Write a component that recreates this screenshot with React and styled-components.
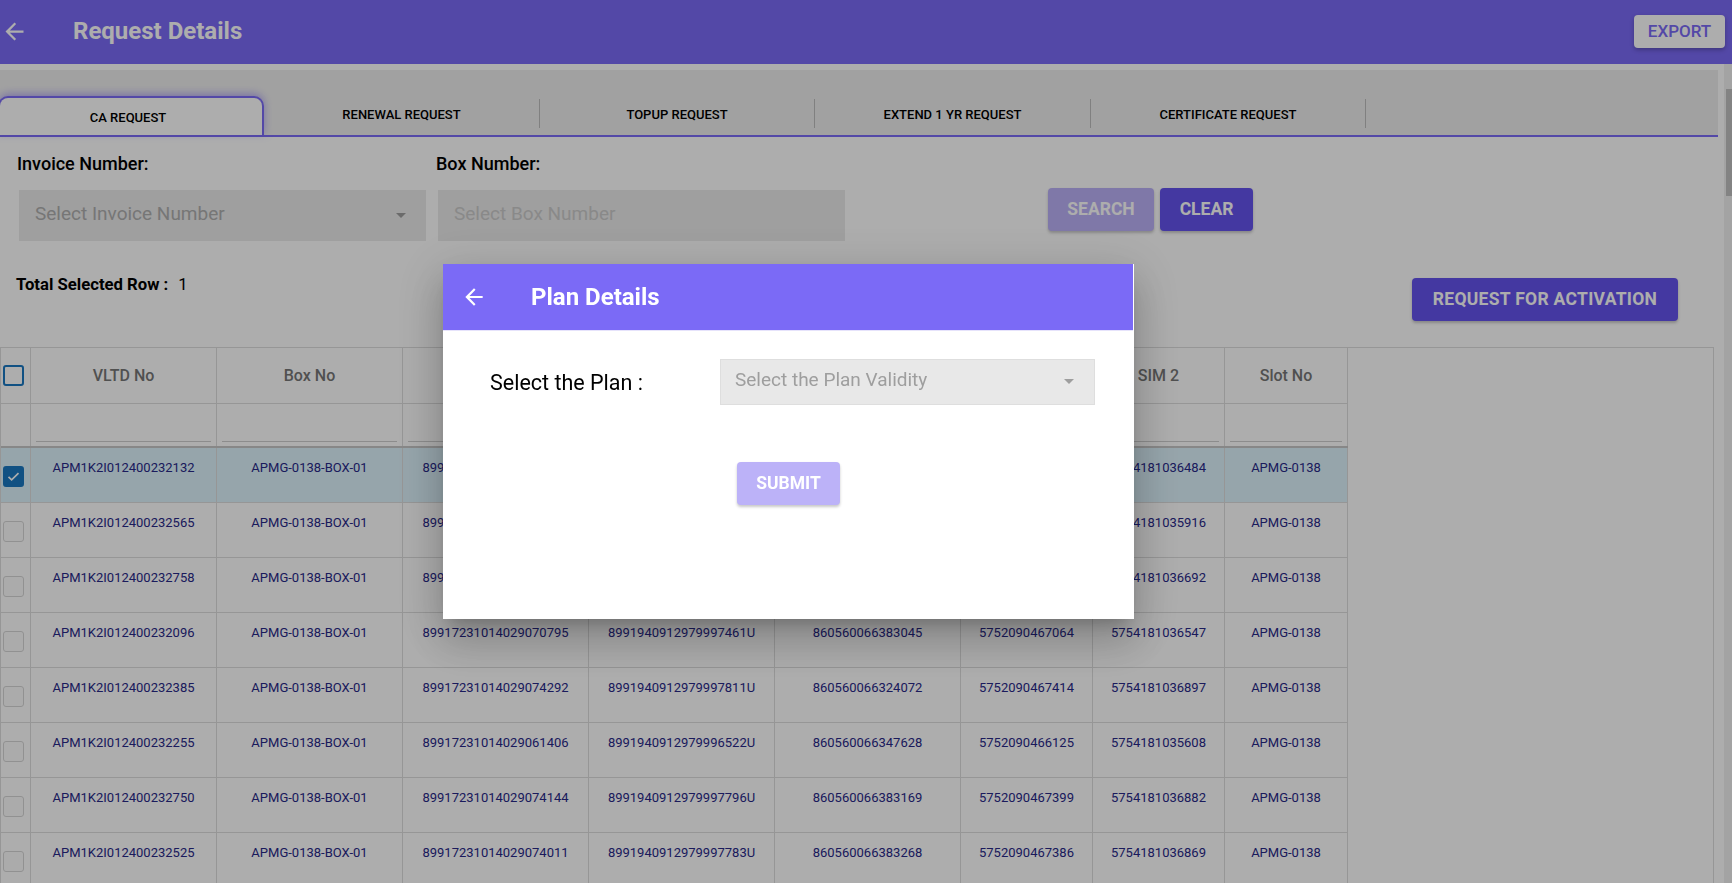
import React from "react";
import styled, { createGlobalStyle } from "styled-components";

const PURPLE = "#7b6af6";
const ACTION = "#6553ed";
const SOFT = "#bcb2f8";
const LINE = "#dddddd";
const NAVY = "#282888";

const Global = createGlobalStyle`
  html, body { margin: 0; padding: 0; overflow: hidden; background: #fff; }
  body { font-family: Roboto, "Liberation Sans", Arial, sans-serif; }
  *, *::before, *::after { box-sizing: border-box; }
`;

const Page = styled.div`
  width: 1732px;
  height: 883px;
  display: flex;
  flex-direction: column;
  overflow: hidden;
  background: #fff;
`;

const TopBar = styled.header`
  height: 64px;
  flex: none;
  display: flex;
  align-items: center;
  padding: 0 7px 2px 1px;
  background: ${PURPLE};
`;

const IconWrap = styled.span`
  display: flex;
  color: #fff;
`;

const Title = styled.h1`
  margin: 0 0 0 ${(p) => p.$gap}px;
  font-size: 24px;
  font-weight: 700;
  color: #fff;
  line-height: 1;
`;

const ExportButton = styled.button`
  margin-left: auto;
  width: 91px;
  height: 33px;
  padding: 0;
  border: none;
  border-radius: 4px;
  background: #fff;
  color: ${PURPLE};
  font-family: inherit;
  font-size: 17px;
  font-weight: 500;
  box-shadow: 0 2px 4px rgba(0, 0, 0, 0.25);
`;

const Main = styled.div`
  flex: 1;
  min-height: 0;
  display: flex;
`;

const Content = styled.div`
  flex: 1;
  min-width: 0;
  display: flex;
  flex-direction: column;
  padding: 6px 6px 0 0;
  overflow: hidden;
`;

const Rail = styled.div`
  width: 8px;
  flex: none;
  background: #f1f1f1;
  padding: 25px 0 0 2px;
`;

const Thumb = styled.div`
  width: 6px;
  height: 107px;
  background: #c1c1c1;
`;

const TabStrip = styled.nav`
  flex: none;
  height: 67px;
  display: flex;
  align-items: flex-end;
  background: #eeeeee;
  border-bottom: 2px solid ${PURPLE};
`;

const Tab = styled.div`
  flex: none;
  display: flex;
  align-items: center;
  justify-content: center;
  font-size: 13px;
  font-weight: 500;
  color: #000;
  ${(p) =>
    p.$active
      ? `
    width: 266px;
    height: 39px;
    margin-left: -2px;
    padding: 2px 6px 0 0;
    background: #fff;
    border: 2px solid ${PURPLE};
    border-bottom: none;
    border-radius: 10px 10px 0 0;
    box-shadow: 0 -2px 8px rgba(123, 106, 246, 0.55);
  `
      : `
    width: ${p.$w}px;
    height: 29px;
    margin-bottom: 7px;
    padding-top: 2px;
    border-right: 1px solid #bdbdbd;
  `}
`;

const FilterBar = styled.div`
  flex: none;
  display: flex;
  align-items: flex-start;
  padding: 15px 0 0 17px;
`;

const Field = styled.div`
  width: 409px;
  margin-right: 10px;
  display: flex;
  flex-direction: column;
`;

const FieldLabel = styled.label`
  font-size: 18px;
  font-weight: 500;
  line-height: 24px;
  color: #000;
`;

const SelectBox = styled.div`
  margin: 14px 0 0 2px;
  width: 407px;
  height: 51px;
  display: flex;
  align-items: center;
  padding: 0 20px 4px 16px;
  background: #eaeaea;
  font-size: 19px;
  color: ${(p) => (p.$muted ? "#cbcbcb" : "#afafaf")};
`;

const Caret = styled.svg`
  margin: 4px 0 0 auto;
  flex: none;
  fill: #9e9e9e;
`;

const ButtonGroup = styled.div`
  display: flex;
  gap: 6px;
  margin: 36px 0 0 193px;
`;

const ActionButton = styled.button`
  height: 43px;
  width: ${(p) => p.$w}px;
  padding: 0 0 2px;
  border: none;
  border-radius: 4px;
  background: ${(p) => (p.$soft ? SOFT : ACTION)};
  color: #fff;
  font-family: inherit;
  font-size: 17.5px;
  font-weight: 700;
  box-shadow: 0 2px 3px rgba(0, 0, 0, 0.22);
`;

const SummaryRow = styled.div`
  flex: none;
  display: flex;
  justify-content: space-between;
  align-items: flex-start;
  margin-top: 34px;
  padding: 0 40px 0 16px;
`;

const SummaryText = styled.div`
  font-size: 16.7px;
  font-weight: 700;
  line-height: 20px;
  color: #000;
`;

const SummaryValue = styled.span`
  font-weight: 400;
  margin-left: 10px;
`;

const ActivateButton = styled(ActionButton)`
  margin-top: 3px;
  letter-spacing: 0.3px;
  font-size: 17.5px;
`;

const GridFrame = styled.div`
  flex: 1;
  min-height: 0;
  margin: 26px 4px 0 0;
  border: 1px solid ${LINE};
  border-bottom: none;
  overflow: hidden;
`;

const COLS = "30px 186px 186px 186px 186px 186px 132px 132px 123px";

const GridRow = styled.div`
  display: grid;
  grid-template-columns: ${COLS};
  width: 1347px;
  height: ${(p) => p.$h}px;
  background: ${(p) => (p.$selected ? "#def4fd" : "transparent")};
  border-bottom: ${(p) => (p.$heavy ? "2px solid #c8c8c8" : "none")};
`;

const HeadCell = styled.div`
  display: flex;
  align-items: center;
  justify-content: ${(p) => (p.$start ? "flex-start" : "center")};
  padding-left: ${(p) => (p.$start ? 2 : 0)}px;
  border-right: 1px solid ${LINE};
  border-bottom: 1px solid ${LINE};
  font-size: 16px;
  font-weight: 500;
  color: #777;
`;

const FilterCell = styled.div`
  border-right: 1px solid ${LINE};
  padding: 4px 5px 0;
`;

const FilterInput = styled.div`
  height: 34px;
  background: #fff;
  border-bottom: 1px solid #cfcfcf;
`;

const DataCell = styled.div`
  padding-top: 12px;
  border-right: 1px solid ${LINE};
  border-bottom: 1px solid ${LINE};
  text-align: center;
  font-size: 13px;
  line-height: 16px;
  color: ${NAVY};
  white-space: nowrap;
  overflow: hidden;
`;

const CheckCell = styled.div`
  padding: 18px 0 0 2px;
  border-right: 1px solid ${LINE};
  border-bottom: 1px solid ${LINE};
`;

const Box = styled.span`
  width: 21px;
  height: 21px;
  display: flex;
  align-items: center;
  justify-content: center;
  border-radius: 3px;
  ${(p) =>
    p.$variant === "checked"
      ? `background: #1a78c2; border: 2px solid #1a78c2;`
      : p.$variant === "head"
      ? `background: #fff; border: 2.5px solid #1a78c2;`
      : `background: #fdfdfd; border: 1.5px solid #d6d6d6;`}
`;

const Overlay = styled.div`
  position: fixed;
  inset: 0;
  z-index: 10;
  display: flex;
  align-items: center;
  padding-left: 443px;
  background: rgba(0, 0, 0, 0.32);
`;

const Dialog = styled.section`
  width: 691px;
  height: 355px;
  display: flex;
  flex-direction: column;
  background: #fff;
  overflow: hidden;
  box-shadow: 0px 11px 15px -7px rgba(0, 0, 0, 0.2),
    0px 24px 38px 3px rgba(0, 0, 0, 0.14), 0px 9px 46px 8px rgba(0, 0, 0, 0.12);
`;

const DialogHeader = styled.div`
  flex: none;
  height: 67px;
  display: flex;
  align-items: center;
  padding-left: 18px;
  margin-right: 1px;
  background: ${PURPLE};
  border-bottom: 1px solid #e6e3fb;
`;

const DialogBody = styled.div`
  padding-top: 28px;
`;

const PlanRow = styled.div`
  display: flex;
  align-items: center;
  padding-left: 47px;
`;

const PlanLabel = styled.span`
  width: 230px;
  font-size: 21.5px;
  font-weight: 400;
  color: #000;
`;

const PlanSelect = styled.div`
  width: 375px;
  height: 46px;
  display: flex;
  align-items: center;
  padding: 0 20px 5px 14px;
  background: #e8e8e8;
  border: 1px solid #dedede;
  font-size: 19px;
  color: #9e9e9e;
`;

const SubmitRow = styled.div`
  display: flex;
  justify-content: center;
  margin-top: 57px;
`;

const ArrowBack = ({ size }) => (
  <svg width={size} height={size} viewBox="0 0 24 24" fill="currentColor">
    <path d="M20 11H7.83l5.59-5.59L12 4l-8 8 8 8 1.41-1.41L7.83 13H20v-2z" />
  </svg>
);

const DropCaret = () => (
  <Caret width="10" height="5" viewBox="0 0 10 5">
    <path d="M0 0l5 5 5-5z" />
  </Caret>
);

const Tick = () => (
  <svg width="15" height="15" viewBox="0 0 24 24" fill="none" stroke="#fff" strokeWidth="2.6">
    <path d="M4 12.5l5 5L20 6.5" />
  </svg>
);

const HEADERS = ["VLTD No", "Box No", "ICCID 1", "ICCID 2", "IMEI No", "SIM 1", "SIM 2", "Slot No"];

const ROWS = [
  ["APM1K2I012400232132", "89917231014029074218", "8991940912979997512U", "860560066335921", "5752090467180", "5754181036484"],
  ["APM1K2I012400232565", "89917231014029061559", "8991940912979996609U", "860560066347719", "5752090466318", "5754181035916"],
  ["APM1K2I012400232758", "89917231014029074381", "8991940912979997832U", "860560066324155", "5752090467553", "5754181036692"],
  ["APM1K2I012400232096", "89917231014029070795", "8991940912979997461U", "860560066383045", "5752090467064", "5754181036547"],
  ["APM1K2I012400232385", "89917231014029074292", "8991940912979997811U", "860560066324072", "5752090467414", "5754181036897"],
  ["APM1K2I012400232255", "89917231014029061406", "8991940912979996522U", "860560066347628", "5752090466125", "5754181035608"],
  ["APM1K2I012400232750", "89917231014029074144", "8991940912979997796U", "860560066383169", "5752090467399", "5754181036882"],
  ["APM1K2I012400232525", "89917231014029074011", "8991940912979997783U", "860560066383268", "5752090467386", "5754181036869"],
];

const TABS = [
  { label: "CA REQUEST", active: true },
  { label: "RENEWAL REQUEST", w: 276 },
  { label: "TOPUP REQUEST", w: 275 },
  { label: "EXTEND 1 YR REQUEST", w: 276 },
  { label: "CERTIFICATE REQUEST", w: 275 },
];

export default function App() {
  return (
    <Page>
      <Global />
      <TopBar>
        <IconWrap>
          <ArrowBack size={27} />
        </IconWrap>
        <Title $gap={45}>Request Details</Title>
        <ExportButton>EXPORT</ExportButton>
      </TopBar>

      <Main>
        <Content>
          <TabStrip>
            {TABS.map((t) => (
              <Tab key={t.label} $active={t.active} $w={t.w}>
                {t.label}
              </Tab>
            ))}
          </TabStrip>

          <FilterBar>
            <Field>
              <FieldLabel>Invoice Number:</FieldLabel>
              <SelectBox>
                Select Invoice Number
                <DropCaret />
              </SelectBox>
            </Field>
            <Field>
              <FieldLabel>Box Number:</FieldLabel>
              <SelectBox $muted>Select Box Number</SelectBox>
            </Field>
            <ButtonGroup>
              <ActionButton $soft $w={106}>SEARCH</ActionButton>
              <ActionButton $w={93}>CLEAR</ActionButton>
            </ButtonGroup>
          </FilterBar>

          <SummaryRow>
            <SummaryText>
              Total Selected Row :<SummaryValue>1</SummaryValue>
            </SummaryText>
            <ActivateButton $w={266}>REQUEST FOR ACTIVATION</ActivateButton>
          </SummaryRow>

          <GridFrame>
            <GridRow $h={56}>
              <HeadCell $start>
                <Box $variant="head" />
              </HeadCell>
              {HEADERS.map((h) => (
                <HeadCell key={h}>{h}</HeadCell>
              ))}
            </GridRow>
            <GridRow $h={44} $heavy>
              <FilterCell />
              {HEADERS.map((h) => (
                <FilterCell key={h}>
                  <FilterInput />
                </FilterCell>
              ))}
            </GridRow>
            {ROWS.map((r, i) => (
              <GridRow key={r[0]} $h={55} $selected={i === 0}>
                <CheckCell>
                  <Box $variant={i === 0 ? "checked" : "plain"}>{i === 0 && <Tick />}</Box>
                </CheckCell>
                <DataCell>{r[0]}</DataCell>
                <DataCell>APMG-0138-BOX-01</DataCell>
                <DataCell>{r[1]}</DataCell>
                <DataCell>{r[2]}</DataCell>
                <DataCell>{r[3]}</DataCell>
                <DataCell>{r[4]}</DataCell>
                <DataCell>{r[5]}</DataCell>
                <DataCell>APMG-0138</DataCell>
              </GridRow>
            ))}
          </GridFrame>
        </Content>
        <Rail>
          <Thumb />
        </Rail>
      </Main>

      <Overlay>
        <Dialog>
          <DialogHeader>
            <IconWrap>
              <ArrowBack size={26} />
            </IconWrap>
            <Title $gap={44}>Plan Details</Title>
          </DialogHeader>
          <DialogBody>
            <PlanRow>
              <PlanLabel>Select the Plan :</PlanLabel>
              <PlanSelect>
                Select the Plan Validity
                <DropCaret />
              </PlanSelect>
            </PlanRow>
            <SubmitRow>
              <ActionButton $soft $w={103}>SUBMIT</ActionButton>
            </SubmitRow>
          </DialogBody>
        </Dialog>
      </Overlay>
    </Page>
  );
}
